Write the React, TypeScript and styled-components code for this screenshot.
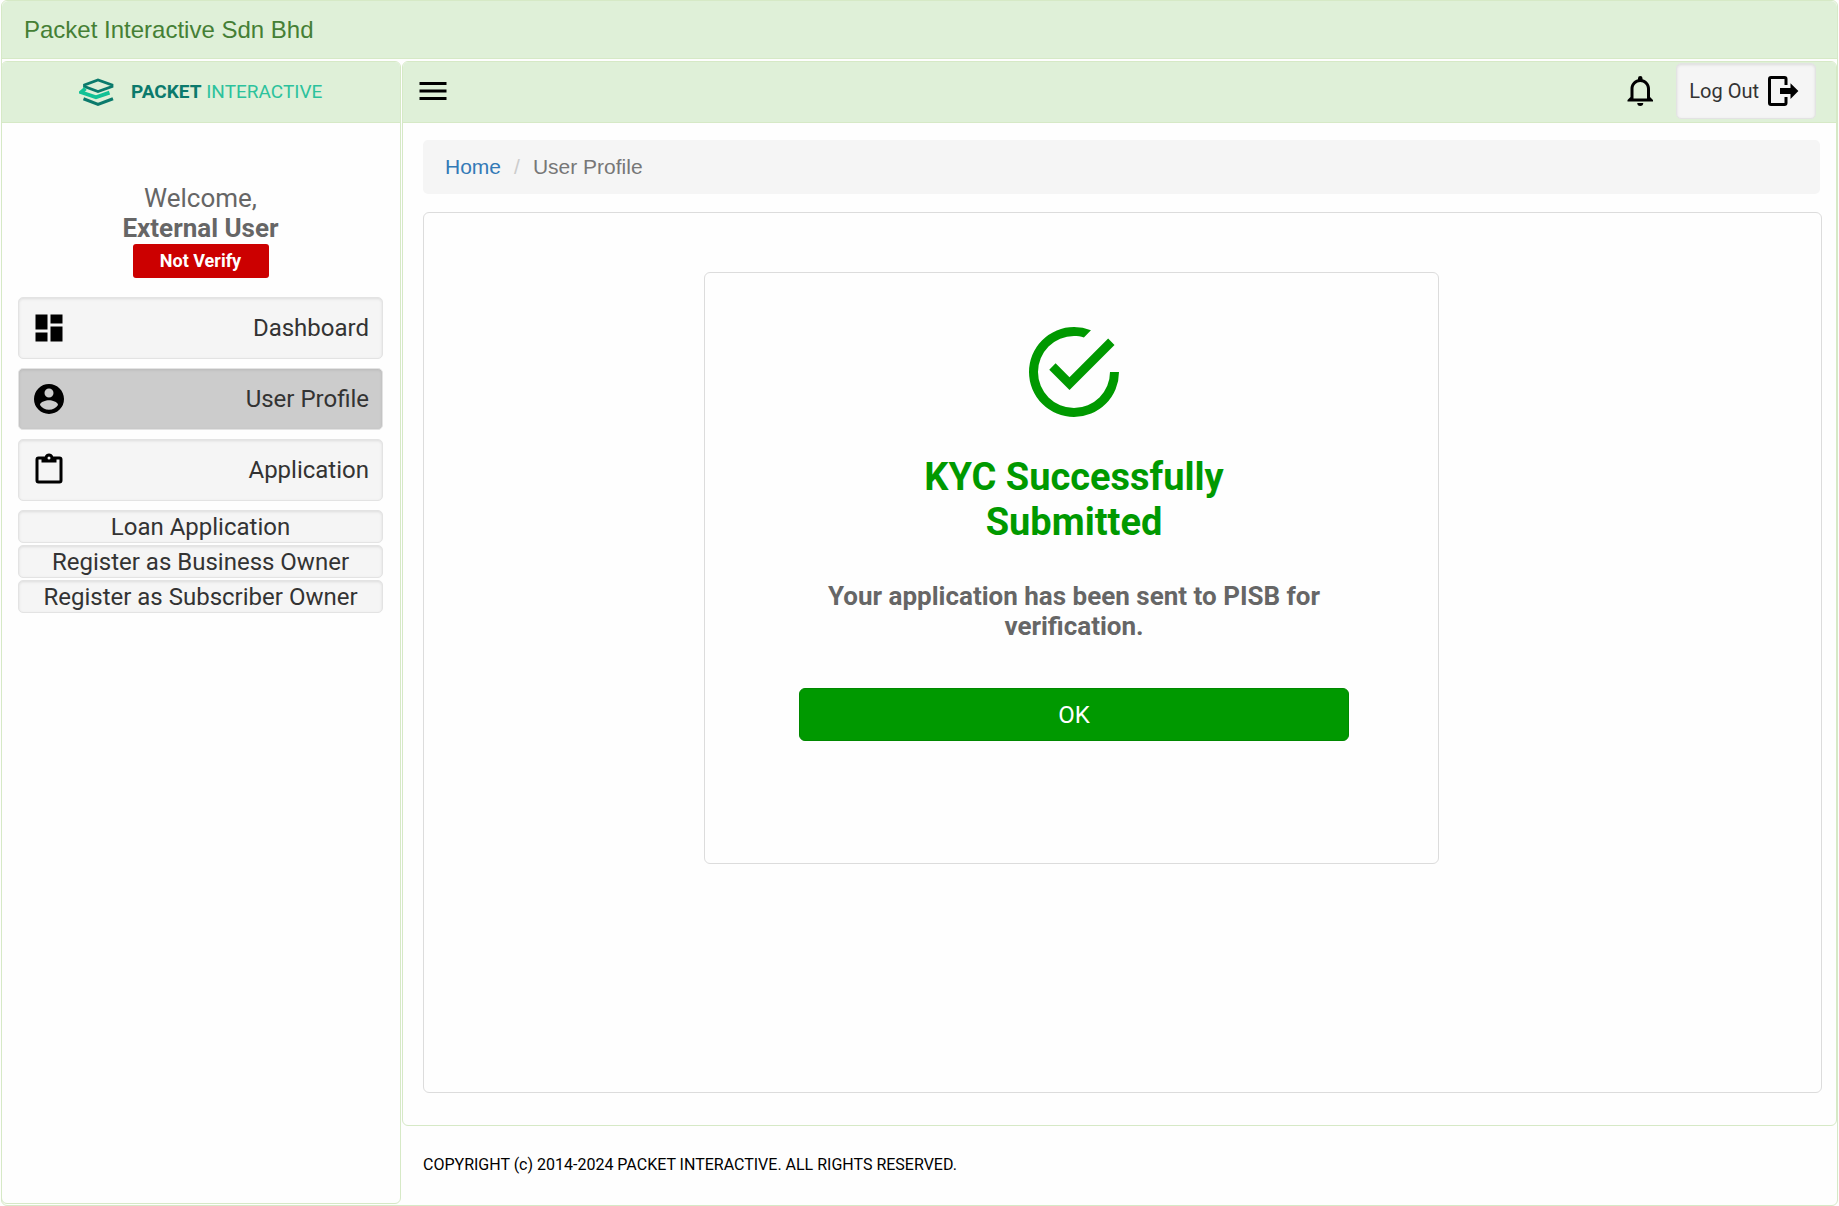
import React from "react";
import styled, { createGlobalStyle } from "styled-components";

const GlobalStyle = createGlobalStyle`
  *, *::before, *::after { box-sizing: border-box; }
  html, body { margin: 0; background: #fefefe; }
  body { font-family: Roboto, "Liberation Sans", sans-serif; color: #333; }
`;

const line = "#d6e9c6";
const pale = "#dff0d8";

const Page = styled.div`
  display: flex;
  flex-direction: column;
  min-height: 100vh;
  padding: 0 1px;
`;

const Shell = styled.div`
  display: flex;
  flex-direction: column;
  flex: 1;
  border: 1px solid ${line};
  border-radius: 6px;
`;

const TitleBar = styled.header`
  height: 58px;
  padding: 0 22px;
  display: flex;
  align-items: center;
  background: ${pale};
  border-bottom: 1px solid ${line};
  border-radius: 6px 6px 0 0;
  font-family: "Liberation Sans", Arial, sans-serif;
  font-size: 24px;
  color: #457f35;
`;

const Columns = styled.div`
  flex: 1;
  display: grid;
  grid-template-columns: 400px 1fr;
  column-gap: 1px;
  padding: 2px 0 1px;
  margin-left: -1px;
`;

const Panel = styled.div`
  display: flex;
  flex-direction: column;
  border: 1px solid ${line};
  border-radius: 6px;
  flex: 1;
`;

const PanelHead = styled.div`
  height: 61px;
  display: flex;
  align-items: center;
  background: ${pale};
  border-bottom: 1px solid ${line};
  border-radius: 5px 5px 0 0;
`;

const LogoBar = styled(PanelHead)`
  padding-left: 77px;
  gap: 17px;
`;

const LogoText = styled.span`
  font-size: 19px;
  line-height: 24px;
  color: #2cc29c;
  white-space: nowrap;
  b { color: #0b7a6c; font-weight: 700; }
`;

const Side = styled.div`
  display: flex;
  flex-direction: column;
  padding: 60px 17px 0 16px;
`;

const Greeting = styled.div`
  display: flex;
  flex-direction: column;
  align-items: center;
  font-size: 26px;
  line-height: 30px;
  color: #666;
`;

const Badge = styled.span`
  width: 136px;
  height: 34px;
  margin: 1px 0 19px;
  border-radius: 3px;
  background: #c00;
  color: #fff;
  font-size: 18px;
  font-weight: 700;
  line-height: 34px;
  text-align: center;
`;

const Nav = styled.nav`
  display: flex;
  flex-direction: column;
`;

const wellShadow = "inset 0 1px 3px rgba(0, 0, 0, 0.1)";

const NavButton = styled.button<{ $active?: boolean }>`
  height: 62px;
  margin-bottom: 9px;
  padding: 0 13px 0 12px;
  display: flex;
  align-items: center;
  justify-content: space-between;
  border: 1px solid #e3e3e3;
  border-radius: 5px;
  background: ${(p) => (p.$active ? "#ccc" : "#f5f5f5")};
  box-shadow: ${wellShadow};
  font: 400 24px/30px Roboto, sans-serif;
  color: #333;
  cursor: pointer;
  svg { color: #000; }
`;

const SubButton = styled.button`
  height: 33px;
  margin-bottom: 2px;
  padding: 0;
  border: 1px solid #e3e3e3;
  border-radius: 5px;
  background: #f5f5f5;
  box-shadow: ${wellShadow};
  font: 400 24px/30px Roboto, sans-serif;
  color: #333;
  cursor: pointer;
`;

const MainColumn = styled.div`
  display: flex;
  flex-direction: column;
  min-width: 0;
`;

const ToolBar = styled(PanelHead)`
  padding: 0 20px 2px 12px;
`;

const IconButton = styled.button`
  display: flex;
  padding: 0;
  border: 0;
  background: none;
  color: #000;
  cursor: pointer;
`;

const Spacer = styled.div`
  flex: 1;
`;

const LogOut = styled.button`
  display: flex;
  align-items: center;
  gap: 6px;
  height: 56px;
  margin-left: 17px;
  padding: 0 14px 0 12px;
  border: 1px solid #e3e3e3;
  border-radius: 5px;
  background: #f5f5f5;
  box-shadow: ${wellShadow};
  font: 400 20px/24px Roboto, sans-serif;
  color: #333;
  cursor: pointer;
  svg { color: #000; }
`;

const MainBody = styled.main`
  flex: 1;
  display: flex;
  flex-direction: column;
  padding: 17px 14px 32px 20px;
`;

const Crumbs = styled.nav`
  height: 54px;
  margin-right: 2px;
  padding: 0 22px;
  display: flex;
  align-items: center;
  gap: 13px;
  border-radius: 5px;
  background: #f5f5f5;
  font-family: "Liberation Sans", Arial, sans-serif;
  font-size: 21px;
  color: #777;
  a { color: #337ab7; text-decoration: none; }
  i { color: #ccc; font-style: normal; }
`;

const Content = styled.section`
  flex: 1;
  margin-top: 18px;
  padding-top: 59px;
  display: grid;
  grid-template-columns: 280fr 736fr 382fr;
  align-items: start;
  border: 1px solid #dcdcdc;
  border-radius: 6px;
`;

const Card = styled.article`
  grid-column: 2;
  display: flex;
  flex-direction: column;
  align-items: center;
  padding: 45px 89px 122px 94px;
  border: 1px solid #dcdcdc;
  border-radius: 6px;
  text-align: center;
  > svg { color: #090; }
`;

const Heading = styled.h1`
  margin: 29px 0 36px;
  max-width: 400px;
  font-size: 38px;
  line-height: 45px;
  font-weight: 700;
  color: #090;
`;

const Message = styled.p`
  margin: 0 0 47px;
  max-width: 520px;
  font-size: 26px;
  line-height: 30px;
  font-weight: 700;
  color: #666;
`;

const OkButton = styled.button`
  width: 100%;
  height: 53px;
  border: 1px solid #080;
  border-radius: 6px;
  background: #090;
  color: #fff;
  font: 400 24px/30px Roboto, sans-serif;
  cursor: pointer;
`;

const Footer = styled.footer`
  padding: 27px 21px;
  font-size: 16px;
  line-height: 24px;
  color: #000;
`;

const icons = {
  dashboard: "M13 3v6h8V3m-8 18h8V11h-8M3 21h8v-6H3m0-2h8V3H3v10z",
  account:
    "M12 19.2c-2.5 0-4.71-1.28-6-3.2.03-2 4-3.1 6-3.1s5.97 1.1 6 3.1a7.232 7.232 0 0 1-6 3.2M12 5a3 3 0 0 1 3 3 3 3 0 0 1-3 3 3 3 0 0 1-3-3 3 3 0 0 1 3-3m0-3A10 10 0 0 0 2 12a10 10 0 0 0 10 10 10 10 0 0 0 10-10c0-5.53-4.5-10-10-10z",
  clipboard:
    "M19 3h-4.18C14.4 1.84 13.3 1 12 1s-2.4.84-2.82 2H5a2 2 0 0 0-2 2v14a2 2 0 0 0 2 2h14a2 2 0 0 0 2-2V5a2 2 0 0 0-2-2m-7 0a1 1 0 0 1 1 1 1 1 0 0 1-1 1 1 1 0 0 1-1-1 1 1 0 0 1 1-1M7 7h10V5h2v14H5V5h2v2z",
  menu: "M3 6h18v2H3V6m0 5h18v2H3v-2m0 5h18v2H3v-2z",
  bell: "M16 17H7v-6.5C7 8 9 6 11.5 6S16 8 16 10.5V17m2-1v-5.5c0-3.07-2.14-5.64-5-6.32V3.5A1.5 1.5 0 0 0 11.5 2 1.5 1.5 0 0 0 10 3.5v.68c-2.87.68-5 3.25-5 6.32V16l-2 2v1h17v-1l-2-2m-6.5 6a2 2 0 0 0 2-2h-4a2 2 0 0 0 2 2z",
  logout:
    "M17 17.25V14h-7v-4h7V6.75L22.25 12 17 17.25M13 2a2 2 0 0 1 2 2v4h-2V4H4v16h9v-4h2v4a2 2 0 0 1-2 2H4a2 2 0 0 1-2-2V4a2 2 0 0 1 2-2h9z",
  check:
    "M20 12a8 8 0 0 1-8 8 8 8 0 0 1-8-8 8 8 0 0 1 8-8c.76 0 1.5.11 2.2.31l1.57-1.57A9.822 9.822 0 0 0 12 2 10 10 0 0 0 2 12a10 10 0 0 0 10 10 10 10 0 0 0 10-10M7.91 10.08 6.5 11.5 11 16 21 6l-1.41-1.42L11 13.17l-3.09-3.09z",
};

const Icon = ({ name, size = 36 }: { name: keyof typeof icons; size?: number }) => (
  <svg width={size} height={size} viewBox="0 0 24 24" fill="currentColor" aria-hidden="true">
    <path d={icons[name]} />
  </svg>
);

const Logo = () => (
  <svg width="35" height="29" viewBox="0 0 35 29" fill="none" aria-hidden="true">
    <path d="M5.5 8.5V7L19 2l14 5v1.500L19 13.500Z" stroke="#0b7a6c" strokeWidth="2.800" />
    <path d="M6.500 10.500 2 14.200 17 19.300 30.500 14.600" stroke="#12c296" strokeWidth="3.800" />
    <path d="M4.500 20.800 19 26.400 34 20.800" stroke="#0b7a6c" strokeWidth="3.200" />
  </svg>
);

const subItems = ["Loan Application", "Register as Business Owner", "Register as Subscriber Owner"];

export default function App() {
  return (
    <>
      <GlobalStyle />
      <Page>
        <Shell>
          <TitleBar>Packet Interactive Sdn Bhd</TitleBar>
          <Columns>
            <Panel as="aside">
              <LogoBar>
                <Logo />
                <LogoText><b>PACKET</b> INTERACTIVE</LogoText>
              </LogoBar>
              <Side>
                <Greeting>
                  <span>Welcome,</span>
                  <strong>External User</strong>
                  <Badge>Not Verify</Badge>
                </Greeting>
                <Nav aria-label="Main">
                  <NavButton type="button"><Icon name="dashboard" />Dashboard</NavButton>
                  <NavButton type="button" $active><Icon name="account" />User Profile</NavButton>
                  <NavButton type="button"><Icon name="clipboard" />Application</NavButton>
                  {subItems.map((label) => (
                    <SubButton type="button" key={label}>{label}</SubButton>
                  ))}
                </Nav>
              </Side>
            </Panel>
            <MainColumn>
              <Panel>
                <ToolBar>
                  <IconButton type="button" aria-label="Menu"><Icon name="menu" /></IconButton>
                  <Spacer />
                  <IconButton type="button" aria-label="Notifications"><Icon name="bell" /></IconButton>
                  <LogOut type="button">Log Out<Icon name="logout" /></LogOut>
                </ToolBar>
                <MainBody>
                  <Crumbs aria-label="Breadcrumb">
                    <a href="#home">Home</a>
                    <i>/</i>
                    <span>User Profile</span>
                  </Crumbs>
                  <Content>
                    <Card>
                      <Icon name="check" size={108} />
                      <Heading>KYC Successfully Submitted</Heading>
                      <Message>Your application has been sent to PISB for verification.</Message>
                      <OkButton type="button">OK</OkButton>
                    </Card>
                  </Content>
                </MainBody>
              </Panel>
              <Footer>COPYRIGHT (c) 2014-2024 PACKET INTERACTIVE. ALL RIGHTS RESERVED.</Footer>
            </MainColumn>
          </Columns>
        </Shell>
      </Page>
    </>
  );
}
